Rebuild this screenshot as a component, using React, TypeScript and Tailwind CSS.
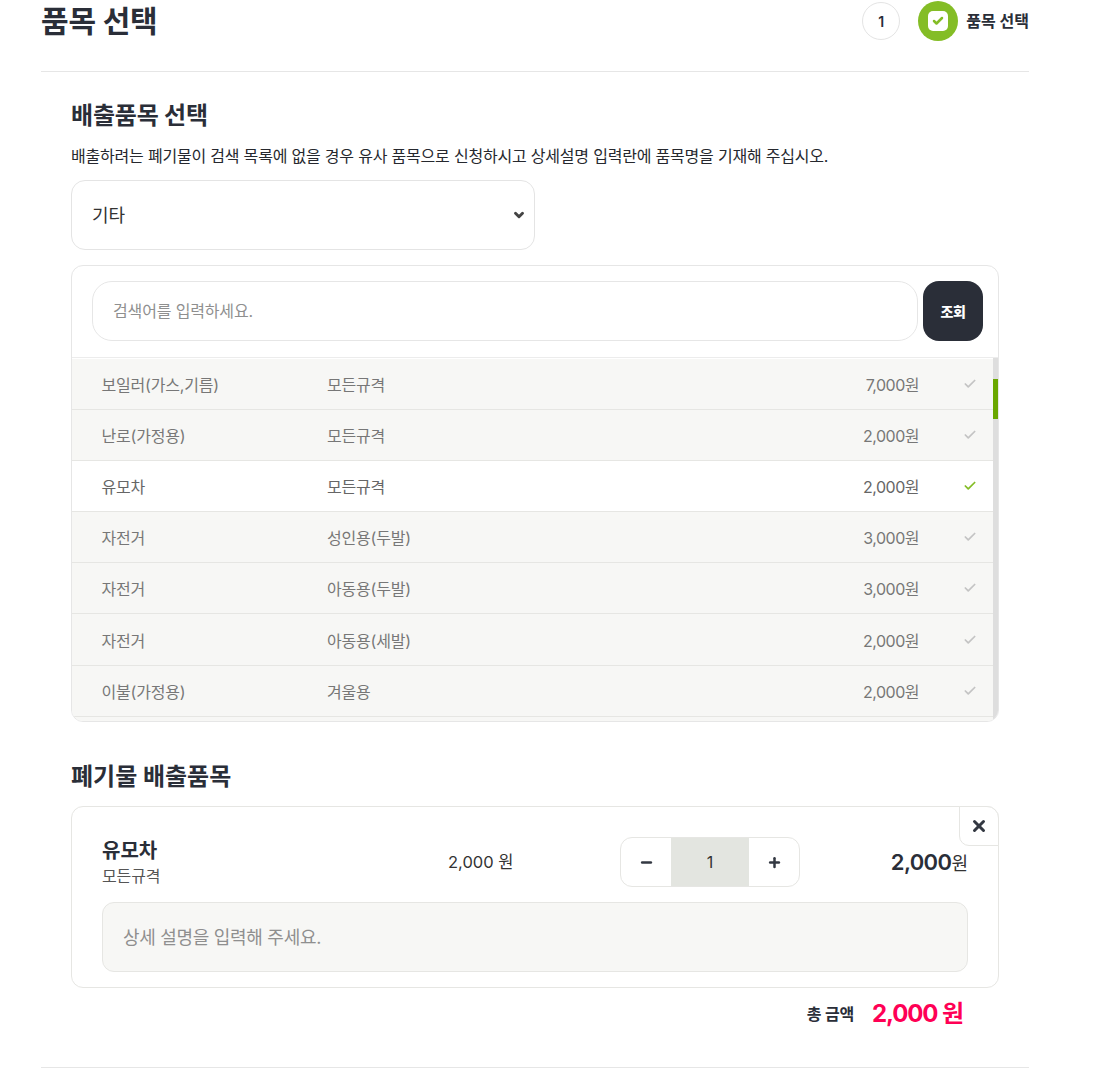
import { Check, Minus, Plus, X, ChevronDown } from "lucide-react";

type Item = {
  name: string;
  spec: string;
  price: string;
  selected?: boolean;
};

const items: Item[] = [
  { name: "보일러(가스,기름)", spec: "모든규격", price: "7,000원" },
  { name: "난로(가정용)", spec: "모든규격", price: "2,000원" },
  { name: "유모차", spec: "모든규격", price: "2,000원", selected: true },
  { name: "자전거", spec: "성인용(두발)", price: "3,000원" },
  { name: "자전거", spec: "아동용(두발)", price: "3,000원" },
  { name: "자전거", spec: "아동용(세발)", price: "2,000원" },
  { name: "이불(가정용)", spec: "겨울용", price: "2,000원" },
];

function ItemRow({ item }: { item: Item }) {
  return (
    <div
      className={`flex h-[51.1px] items-center border-b border-[#e6e6e3] pl-[29.5px] text-[16px] tracking-[-0.2px] ${
        item.selected ? "bg-white text-[#666]" : "bg-[#f7f7f5] text-[#777]"
      }`}
    >
      <span className="w-[225.5px] pt-[2px]">{item.name}</span>
      <span className="flex-1 pt-[2px]">{item.spec}</span>
      <span className="w-[100px] pt-[2px] text-right tracking-[-0.5px]">{item.price}</span>
      <span className="flex w-[74px] justify-end pr-[16px]">
        <Check className={`h-[14px] w-[14px] ${item.selected ? "text-[#84bd26]" : "text-[#c4c4c4]"}`} strokeWidth={3} />
      </span>
    </div>
  );
}

export default function App() {
  return (
    <div className="ml-[41px] w-[988px] font-['Inter','Noto_Sans_CJK_KR',sans-serif] text-[#2a2e38]">
      <header className="flex h-[72px] items-start justify-between border-b border-[#e6e6e6]">
        <h1 className="text-[30px] font-bold leading-[42px] tracking-[-0.2px]">품목 선택</h1>
        <div className="flex items-center gap-[18px] pt-px">
          <span className="flex h-[38px] w-[38px] items-center justify-center rounded-full border border-[#e4e4e4] text-[14px] font-semibold">1</span>
          <div className="flex items-center gap-[8px]">
            <span className="flex h-[40px] w-[40px] items-center justify-center rounded-full bg-[#84bd26]">
              <span className="flex h-[20px] w-[20px] items-center justify-center rounded-[5px] bg-white">
                <Check className="h-[12px] w-[12px] text-[#84bd26]" strokeWidth={5} />
              </span>
            </span>
            <span className="text-[16px] font-bold">품목 선택</span>
          </div>
        </div>
      </header>

      <main className="px-[30px]">
        <h2 className="mt-[27px] text-[24px] font-bold leading-[34px] tracking-[-0.2px]">배출품목 선택</h2>
        <p className="mt-[11px] text-[16px] leading-[24px] tracking-[-0.2px] text-[#26282e]">
          배출하려는 폐기물이 검색 목록에 없을 경우 유사 품목으로 신청하시고 상세설명 입력란에 품목명을 기재해 주십시오.
        </p>

        <div className="relative mt-[12px] h-[70px] w-[464px]">
          <select className="h-full w-full appearance-none rounded-[14px] border border-[#e4e4e4] bg-white pl-[20px] text-[18px] text-[#333] outline-none">
            <option>기타</option>
          </select>
          <ChevronDown className="absolute right-[9px] top-[28px] h-[14px] w-[14px] text-[#444]" strokeWidth={5} />
        </div>

        <section className="mt-[15px] overflow-hidden rounded-[12px] border border-[#e6e6e6]">
          <div className="flex gap-[5px] pb-[16px] pl-[20px] pr-[15px] pt-[15px]">
            <input
              className="h-[60px] min-w-0 flex-1 rounded-[20px] border border-[#e6e6e6] px-[20px] text-[16px] tracking-[-0.15px] outline-none placeholder:text-[#8f8f8f]"
              placeholder="검색어를 입력하세요."
            />
            <button type="button" className="h-[60px] w-[60px] rounded-[16px] bg-[#2a2e38] text-[14px] font-extrabold tracking-[-0.3px] text-white">
              조회
            </button>
          </div>
          <div className="flex h-[364px] overflow-hidden border-t border-[#ececec]">
            <div className="min-w-0 flex-1 pt-px">
              {items.map((item, index) => (
                <ItemRow key={index} item={item} />
              ))}
              <div className="h-[10px] bg-[#f7f7f5]" />
            </div>
            <div className="w-[5px] bg-[#dedede] pt-[21px]">
              <div className="h-[40px] bg-[#6aa700]" />
            </div>
          </div>
        </section>

        <h2 className="mt-[38px] text-[24px] font-bold leading-[34px]">폐기물 배출품목</h2>

        <section className="relative mt-[12px] h-[182px] rounded-[12px] border border-[#e6e6e3] px-[30px] pt-[30px]">
          <button
            type="button"
            className="absolute -right-px -top-px flex h-[40px] w-[40px] items-center justify-center rounded-bl-[10px] rounded-tr-[12px] border border-[#e6e6e3] bg-white"
          >
            <X className="h-[18px] w-[18px] text-[#333842]" strokeWidth={4} />
          </button>
          <div className="flex h-[50px] items-center">
            <div className="w-[346px]">
              <div className="text-[20px] font-bold leading-[28px]">유모차</div>
              <div className="text-[16px] leading-[22px] tracking-[-0.1px] text-[#555]">모든규격</div>
            </div>
            <div className="w-[96px] text-[16.5px] text-[#333]">2,000 원</div>
            <div className="ml-[76px] flex h-[50px] w-[180px] overflow-hidden rounded-[12px] border border-[#e6e6e3]">
              <span className="flex w-[50px] items-center justify-center">
                <Minus className="h-[15px] w-[15px] text-[#333842]" strokeWidth={4} />
              </span>
              <span className="flex flex-1 items-center justify-center bg-[#e3e5e0] text-[16px] text-[#333]">1</span>
              <span className="flex w-[50px] items-center justify-center">
                <Plus className="h-[15px] w-[15px] text-[#333842]" strokeWidth={4} />
              </span>
            </div>
            <div className="flex-1 text-right text-[18px] text-[#333]">
              <span className="text-[22px] font-semibold tracking-[-0.6px] text-[#2a2e38]">2,000</span>원
            </div>
          </div>
          <input
            className="mt-[15px] h-[70px] w-full rounded-[12px] border border-[#e6e6e3] bg-[#f7f7f5] px-[20px] text-[18px] tracking-[-0.3px] outline-none placeholder:text-[#8f8f8f]"
            placeholder="상세 설명을 입력해 주세요."
          />
        </section>

        <div className="mt-[9px] flex items-center justify-end gap-[18px] pr-[36px]">
          <span className="text-[16px] font-bold tracking-[-0.2px]">총 금액</span>
          <span className="text-[24px] font-bold leading-[34px] tracking-[-1.1px] text-[#ff0055]">2,000 원</span>
        </div>
      </main>

      <div className="mt-[36px] border-b border-[#e6e6e6]" />
    </div>
  );
}
